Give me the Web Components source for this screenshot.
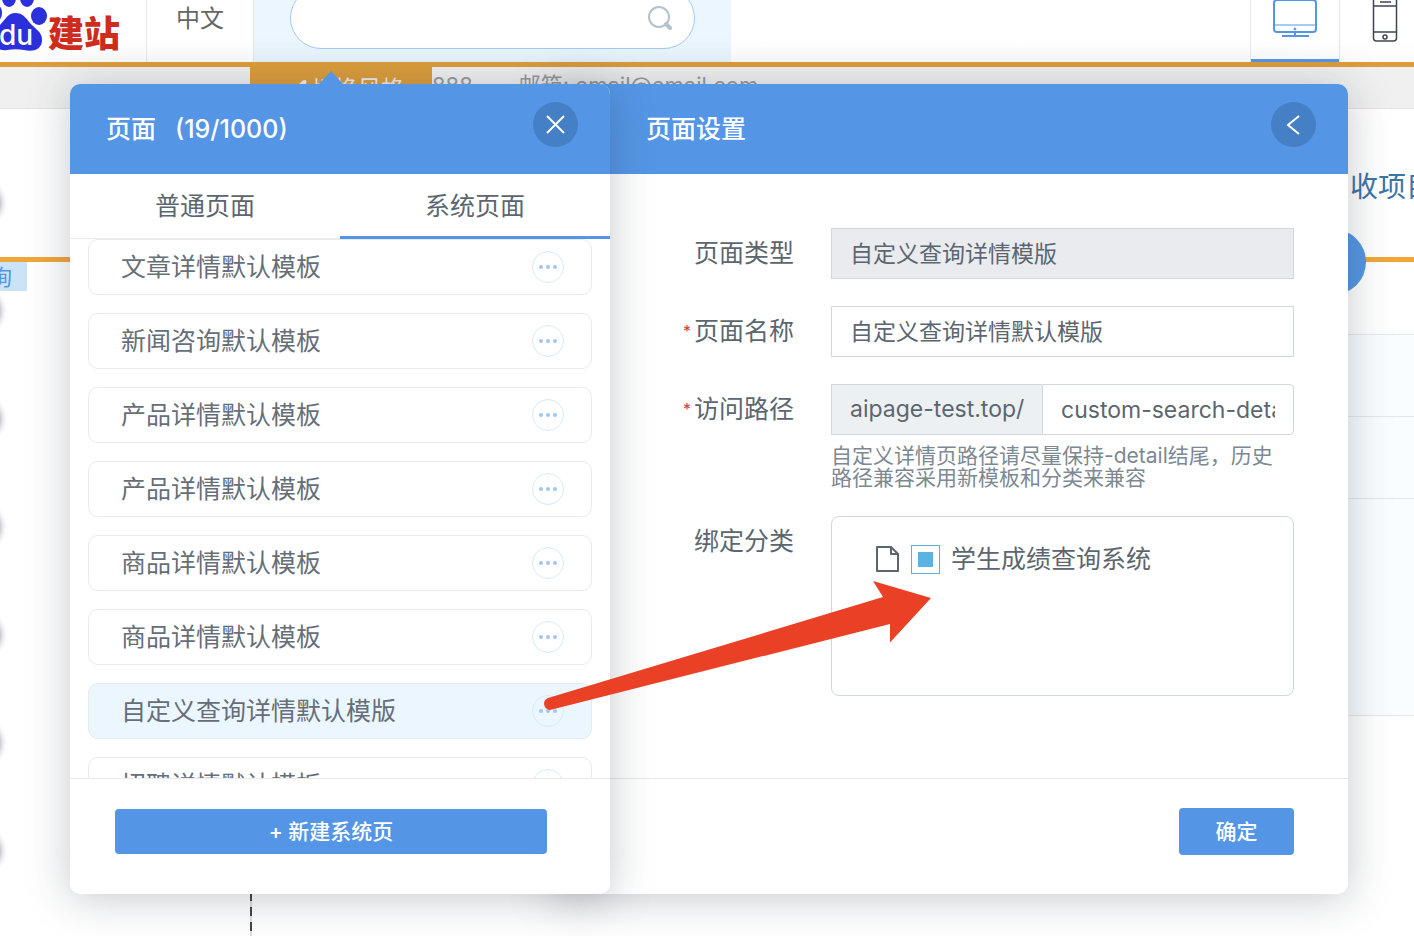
<!DOCTYPE html>
<html lang="zh-CN">
<head>
<meta charset="utf-8">
<title>页面设置</title>
<style>
  html, body { margin: 0; }
  body {
    font-family: Inter, "Noto Sans CJK SC", sans-serif;
    font-size: 25px;
    line-height: 32px;
    color: #5c666e;
    background: #fff;
    min-height: 100vh;
    overflow: hidden;
    --blue: #5496e5;
    --line: #e8eaeb;
    --field: #cfd8dc;
  }
</style>
</head>
<body>
<builder-app></builder-app>
<script>
const define = (name, html, setup) => {
  const tpl = document.createElement('template');
  tpl.innerHTML = '<style>*{box-sizing:border-box}button,input{font:inherit;color:inherit;margin:0}button{cursor:pointer}</style>' + html;
  customElements.define(name, class extends HTMLElement {
    constructor() {
      super();
      this.attachShadow({ mode: 'open' }).append(tpl.content.cloneNode(true));
      if (setup) setup(this, this.shadowRoot);
    }
  });
};

/* Round translucent button in a panel header */
define('round-button', `
<style>
  :host { display: block; flex: none; }
  button { display: flex; align-items: center; justify-content: center; width: 45px; height: 45px; padding: 0;
    border: 0; border-radius: 50%; background: #457fc6; color: #fff; }
</style>
<button type="button"><slot></slot></button>`, (el, root) => {
  root.querySelector('button').setAttribute('aria-label', el.getAttribute('label') || '');
});

/* Top tool bar of the site builder */
define('tool-bar', `
<style>
  :host { display: block; overflow: hidden; border-bottom: 5px solid #dc9c3b; background: linear-gradient(#fff 40px, #fafafa); }
  .row { display: flex; height: 87px; margin: -25px -16px 0 0; }
  .logo { display: flex; align-items: center; width: 147px; border-right: 1px solid #e6e6e6; }
  .logo svg { flex: none; width: 48px; height: 87px; }
  .logo b { font-size: 36px; line-height: 60px; font-weight: 900; color: #cf2c20; padding-top: 30px; }
  .lang { display: flex; align-items: center; justify-content: center; width: 107px; border: 0; border-right: 1px solid #e6e6e6; background: none; padding: 0; font-size: 24px; color: #666; }
  .search { width: 477px; padding: 12px 36px 13px; background: linear-gradient(#ebf6ff 60px, #e6f2fa); }
  .pill { display: flex; align-items: center; height: 62px; width: 405px; padding: 0 20px 0 28px; border: 1px solid #a3caf0; border-radius: 31px; background: #fff; }
  .pill input { flex: 1; min-width: 0; border: 0; outline: 0; background: none; }
  .devices { display: flex; margin-left: auto; }
  .devices button { display: flex; justify-content: center; align-items: center; width: 90px; padding: 0; border: 0; background: none; }
  .devices .on { border: solid #e6e6e6; border-width: 0 1px; box-shadow: inset 0 -3px var(--blue); }
</style>
<div class="row">
  <div class="logo">
    <svg viewBox="0 0 48 87" aria-hidden="true">
      <g fill="#2b2fdc">
        <ellipse cx="9" cy="23" rx="7" ry="9"/><ellipse cx="27" cy="23" rx="7" ry="9"/>
        <ellipse cx="39" cy="41" rx="8" ry="9"/><ellipse cx="-4" cy="38" rx="6" ry="9"/>
        <path d="M15 38c-7 0-10 7-16 13-5 4-7 9-6 14 1 8 7 11 14 10 6-1 11-1 17 0 9 2 17 0 18-9 1-9-7-12-12-18-4-5-7-10-15-10z"/>
      </g>
      <text x="-1" y="70" font-size="28" font-weight="500" font-family="Inter, sans-serif" fill="#fff">du</text>
    </svg>
    <b>建站</b>
  </div>
  <button class="lang" type="button">中文</button>
  <div class="search"><div class="pill">
    <input type="search" aria-label="搜索">
    <svg width="28" height="28" viewBox="0 0 28 28" fill="none" stroke="#b4c2cd"><circle cx="13" cy="13" r="10" stroke-width="2"/><path d="m20 20 1 1 3 3" stroke-width="4" stroke-linecap="round"/></svg>
  </div></div>
  <div class="devices">
    <button class="on" type="button" aria-label="电脑">
      <svg width="44" height="42" viewBox="0 0 44 42" fill="none" stroke="#5496e5" stroke-width="2"><rect x="1" y="2" width="42" height="32" rx="3"/><path d="M1 27h42" stroke-width="1"/><path d="M22 34v4M9 38h27"/><circle cx="22" cy="31" r="1" fill="#5496e5" stroke-width="1"/></svg>
    </button>
    <button type="button" aria-label="手机">
      <svg width="26" height="46" viewBox="0 0 26 46" fill="none" stroke="#3f4650" stroke-width="1.5"><rect x="1.500" y="1" width="23" height="44" rx="3"/><path d="M1.500 10h23M1.500 36h23M8 6h11"/><circle cx="13" cy="41" r="2"/></svg>
    </button>
  </div>
</div>`);

/* The edited site, visible behind the dialog */
define('site-preview', `
<style>
  :host { display: flex; flex-direction: column; flex: 1; position: relative; overflow: hidden; }
  .info { display: flex; align-items: center; height: 42px; padding-left: 250px; background: #f0f0f0; border-bottom: 1px solid #e3e3e3; font-size: 22px; color: #999; white-space: nowrap; }
  .info span { line-height: 36px; padding-bottom: 6px; }
  .style { display: flex; align-items: center; gap: 4px; width: 182px; height: 42px; padding: 2px 0 0 38px; border: 0; background: #dc9c3b; color: #eee; font-size: 23px; }
  .mail { margin-left: 46px; }
  .hero { display: flex; justify-content: flex-end; align-items: center; height: 153px; margin-right: -20px; padding-top: 7px; border-bottom: 5px solid #f1a638; }
  a { color: #3a76a8; font-size: 28px; text-decoration: none; }
  .body { display: flex; flex: 1; }
  .side { width: 250px; }
  .tag { display: flex; justify-content: flex-end; align-items: center; width: 27px; height: 29px; padding-right: 15px; background: #cbe3f6; color: var(--blue); font-size: 22px; }
  .guide { width: 2px; background: repeating-linear-gradient(#444 0 9px, #ddd 9px 15px); }
  .table { flex: 1; padding-top: 72px; }
  .table div { height: 82px; border-top: 1px solid #e3e8ea; background: #f9fdff; }
  .table div:last-child { height: 218px; border-bottom: 1px solid #e3e8ea; }
  .rail { position: absolute; left: -42px; top: 115px; display: grid; gap: 66px; }
  .rail i { width: 42px; height: 42px; border-radius: 50%; box-shadow: 0 0 7px #889; }
  .dot { position: absolute; right: 48px; top: 162px; width: 66px; height: 66px; border-radius: 50%; background: var(--blue); }
</style>
<div class="info">
  <button class="style" type="button"><svg width="20" height="20" viewBox="0 0 20 20" fill="#eee"><path d="M17 1c3 1 1 4-1 6l-6 7-4-3 6-7c2-2 3-3 5-3zM5 12l4 3c-1 4-5 4-8 4 2-2 1-6 4-7z"/></svg>切换风格</button>
  <span>888</span><span class="mail">邮箱: email@email.com</span>
</div>
<div class="hero"><a href="#">收项目</a></div>
<div class="body">
  <div class="side"><div class="tag">询</div></div>
  <div class="guide"></div>
  <div class="table"><div></div><div></div><div></div></div>
</div>
<div class="rail"><i></i><i></i><i></i><i></i><i></i><i></i><i></i></div>
<div class="dot"></div>`);

/* One page entry in the list */
define('page-item', `
<style>
  :host { display: flex; align-items: center; justify-content: space-between; flex: none; box-sizing: border-box; height: 56px; padding: 0 27px 0 32px;
    border: 1px solid var(--line); border-radius: 10px; color: #666e78; white-space: nowrap; }
  :host([selected]) { background: #ebf6ff; }
  button { display: flex; align-items: center; justify-content: center; width: 32px; height: 32px; padding: 0; border: 1px solid #d6e9fa; border-radius: 50%; background: none; }
</style>
<slot></slot>
<button type="button" aria-label="更多"><svg width="20" height="6" viewBox="0 0 20 6" fill="#a3c7f0"><circle cx="3" cy="3" r="2"/><circle cx="10" cy="3" r="2"/><circle cx="17" cy="3" r="2"/></svg></button>`);

/* Left panel: list of pages */
define('page-list', `
<style>
  :host { display: flex; flex-direction: column; position: relative; z-index: 1; flex: none; width: 540px; background: #fff; border-radius: 10px; box-shadow: 0 4px 44px rgba(40, 50, 65, .27); }
  header { display: flex; align-items: flex-start; justify-content: space-between; height: 90px; padding: 18px 32px 0 36px; border-radius: 10px 10px 0 0; background: var(--blue); color: #fff; }
  h2 { display: flex; gap: 19px; margin: 0; font-size: 25px; line-height: 54px; font-weight: 500; }
  nav { display: flex; height: 65px; border-bottom: 1px solid var(--line); }
  nav button { flex: 1; border: 0; background: none; padding: 0; }
  nav .on { margin-bottom: -1px; border-bottom: 3px solid var(--blue); padding-top: 2px; }
  .items { display: flex; flex-direction: column; gap: 18px; height: 539px; padding: 0 18px; overflow: hidden; }
  footer { padding: 30px 63px 40px 45px; border-top: 1px solid var(--line); }
  footer button { display: block; width: 100%; height: 45px; padding: 0; border: 0; border-radius: 4px; background: var(--blue); color: #fff; font-size: 21px; font-weight: 500; }
</style>
<header>
  <h2><span>页面</span><span>(19/1000)</span></h2>
  <round-button label="关闭"><svg width="19" height="19" viewBox="0 0 19 19" stroke="#fff" stroke-width="2"><path d="m1 1 17 17M18 1 1 18"/></svg></round-button>
</header>
<nav><button type="button">普通页面</button><button class="on" type="button">系统页面</button></nav>
<div class="items"><slot></slot></div>
<footer><button type="button">+ 新建系统页</button></footer>`);

/* Right panel: settings of the chosen page */
define('page-settings', `
<style>
  :host { display: flex; flex-direction: column; flex: 1; min-width: 0; margin-left: -60px; background: #fff; border-radius: 10px; box-shadow: 0 4px 44px rgba(40, 50, 65, .27); }
  header { display: flex; align-items: flex-start; justify-content: space-between; height: 90px; padding: 18px 32px 0 96px; border-radius: 10px 10px 0 0; background: var(--blue); color: #fff; }
  h2 { margin: 0; font-size: 25px; line-height: 54px; font-weight: 500; }
  form { flex: 1; display: grid; grid-template-columns: auto minmax(0, 1fr); align-content: start; gap: 27px 37px; padding: 54px 54px 54px 133px; }
  .name { line-height: 51px; white-space: nowrap; text-align: right; }
  .name i { font: 16px/51px Inter, sans-serif; color: #d43b43; margin-right: 3px; vertical-align: top; }
  .text { display: block; width: 100%; height: 51px; padding: 0 18px 3px; border: 1px solid var(--field); border-radius: 0; background: #fff; font-size: 23px; outline: 0; }
  .text:disabled { background: #e9ebef; }
  .path { display: flex; }
  .path span { flex: none; width: 211px; padding: 0 18px; border: 1px solid var(--field); border-right: 0; background: #ecf0f2; font-size: 23px; line-height: 49px; white-space: nowrap; }
  .path .text { flex: 1; min-width: 0; padding-bottom: 0; border-radius: 0 4px 4px 0; }
  p { margin: 10px 0 0; padding-right: 8px; font-size: 21px; line-height: 22px; color: #7c8892; }
  .tree { height: 180px; padding: 25px 44px; border: 1px solid var(--field); border-radius: 8px; }
  .leaf { display: flex; align-items: center; height: 34px; }
  .leaf input { appearance: none; width: 29px; height: 29px; margin: 0 11px; padding: 6px; border: 1px solid #5bb0df; background: #fff; }
  .leaf input:checked { background: #5bb3e1 content-box; }
  footer { display: flex; justify-content: flex-end; padding: 29px 54px 39px; border-top: 1px solid var(--line); }
  footer button { width: 115px; height: 47px; padding: 0; border: 0; border-radius: 4px; background: var(--blue); color: #fff; font-size: 21px; font-weight: 500; }
</style>
<header>
  <h2>页面设置</h2>
  <round-button label="收起"><svg width="14" height="20" viewBox="0 0 14 20" fill="none" stroke="#fff" stroke-width="2"><path d="M12 1 1 10l11 9"/></svg></round-button>
</header>
<form>
  <label class="name" for="type">页面类型</label>
  <input class="text" id="type" value="自定义查询详情模版" disabled>
  <label class="name" for="title"><i>*</i>页面名称</label>
  <input class="text" id="title" value="自定义查询详情默认模版">
  <label class="name" for="path"><i>*</i>访问路径</label>
  <div>
    <div class="path"><span>aipage-test.top/</span><input class="text" id="path" value="custom-search-detail"></div>
    <p>自定义详情页路径请尽量保持-detail结尾，历史路径兼容采用新模板和分类来兼容</p>
  </div>
  <span class="name">绑定分类</span>
  <div class="tree"><div class="leaf">
    <svg width="24" height="28" viewBox="0 0 24 28" fill="none" stroke="#5c666e" stroke-width="2" stroke-linejoin="round"><path d="M1 2h14l7 7v17H1zM15 2v7h7"/></svg>
    <input type="checkbox" id="cat" checked><label for="cat">学生成绩查询系统</label>
  </div></div>
</form>
<footer><button type="button">确定</button></footer>`);

/* Dialog frame with its pointer and the red annotation arrow */
define('page-dialog', `
<style>
  :host { display: flex; position: absolute; z-index: 2; top: 84px; left: 70px; right: 66px; }
  .tip { position: absolute; z-index: 2; top: -13px; left: 248px; }
  .arrow { position: absolute; z-index: 3; top: 490px; left: 470px; pointer-events: none; }
</style>
<slot></slot>
<svg class="tip" width="26" height="14" viewBox="0 0 26 14" fill="#5496e5"><path d="M13 0 26 14H0z"/></svg>
<svg class="arrow" width="400" height="140" viewBox="540 574 400 140" fill="#ea4126"><path d="M931 598 873 581 883 597 548 698C542 700 543 709 550 710L890 624V642.500z"/></svg>`);

define('builder-app', `
<style>:host { display: flex; flex-direction: column; position: relative; min-height: 100vh; }</style>
<tool-bar></tool-bar>
<site-preview></site-preview>
<page-dialog>
  <page-list>
    <page-item>文章详情默认模板</page-item>
    <page-item>新闻咨询默认模板</page-item>
    <page-item>产品详情默认模板</page-item>
    <page-item>产品详情默认模板</page-item>
    <page-item>商品详情默认模板</page-item>
    <page-item>商品详情默认模板</page-item>
    <page-item selected>自定义查询详情默认模版</page-item>
    <page-item>招聘详情默认模板</page-item>
  </page-list>
  <page-settings></page-settings>
</page-dialog>`);
</script>
</body>
</html>
